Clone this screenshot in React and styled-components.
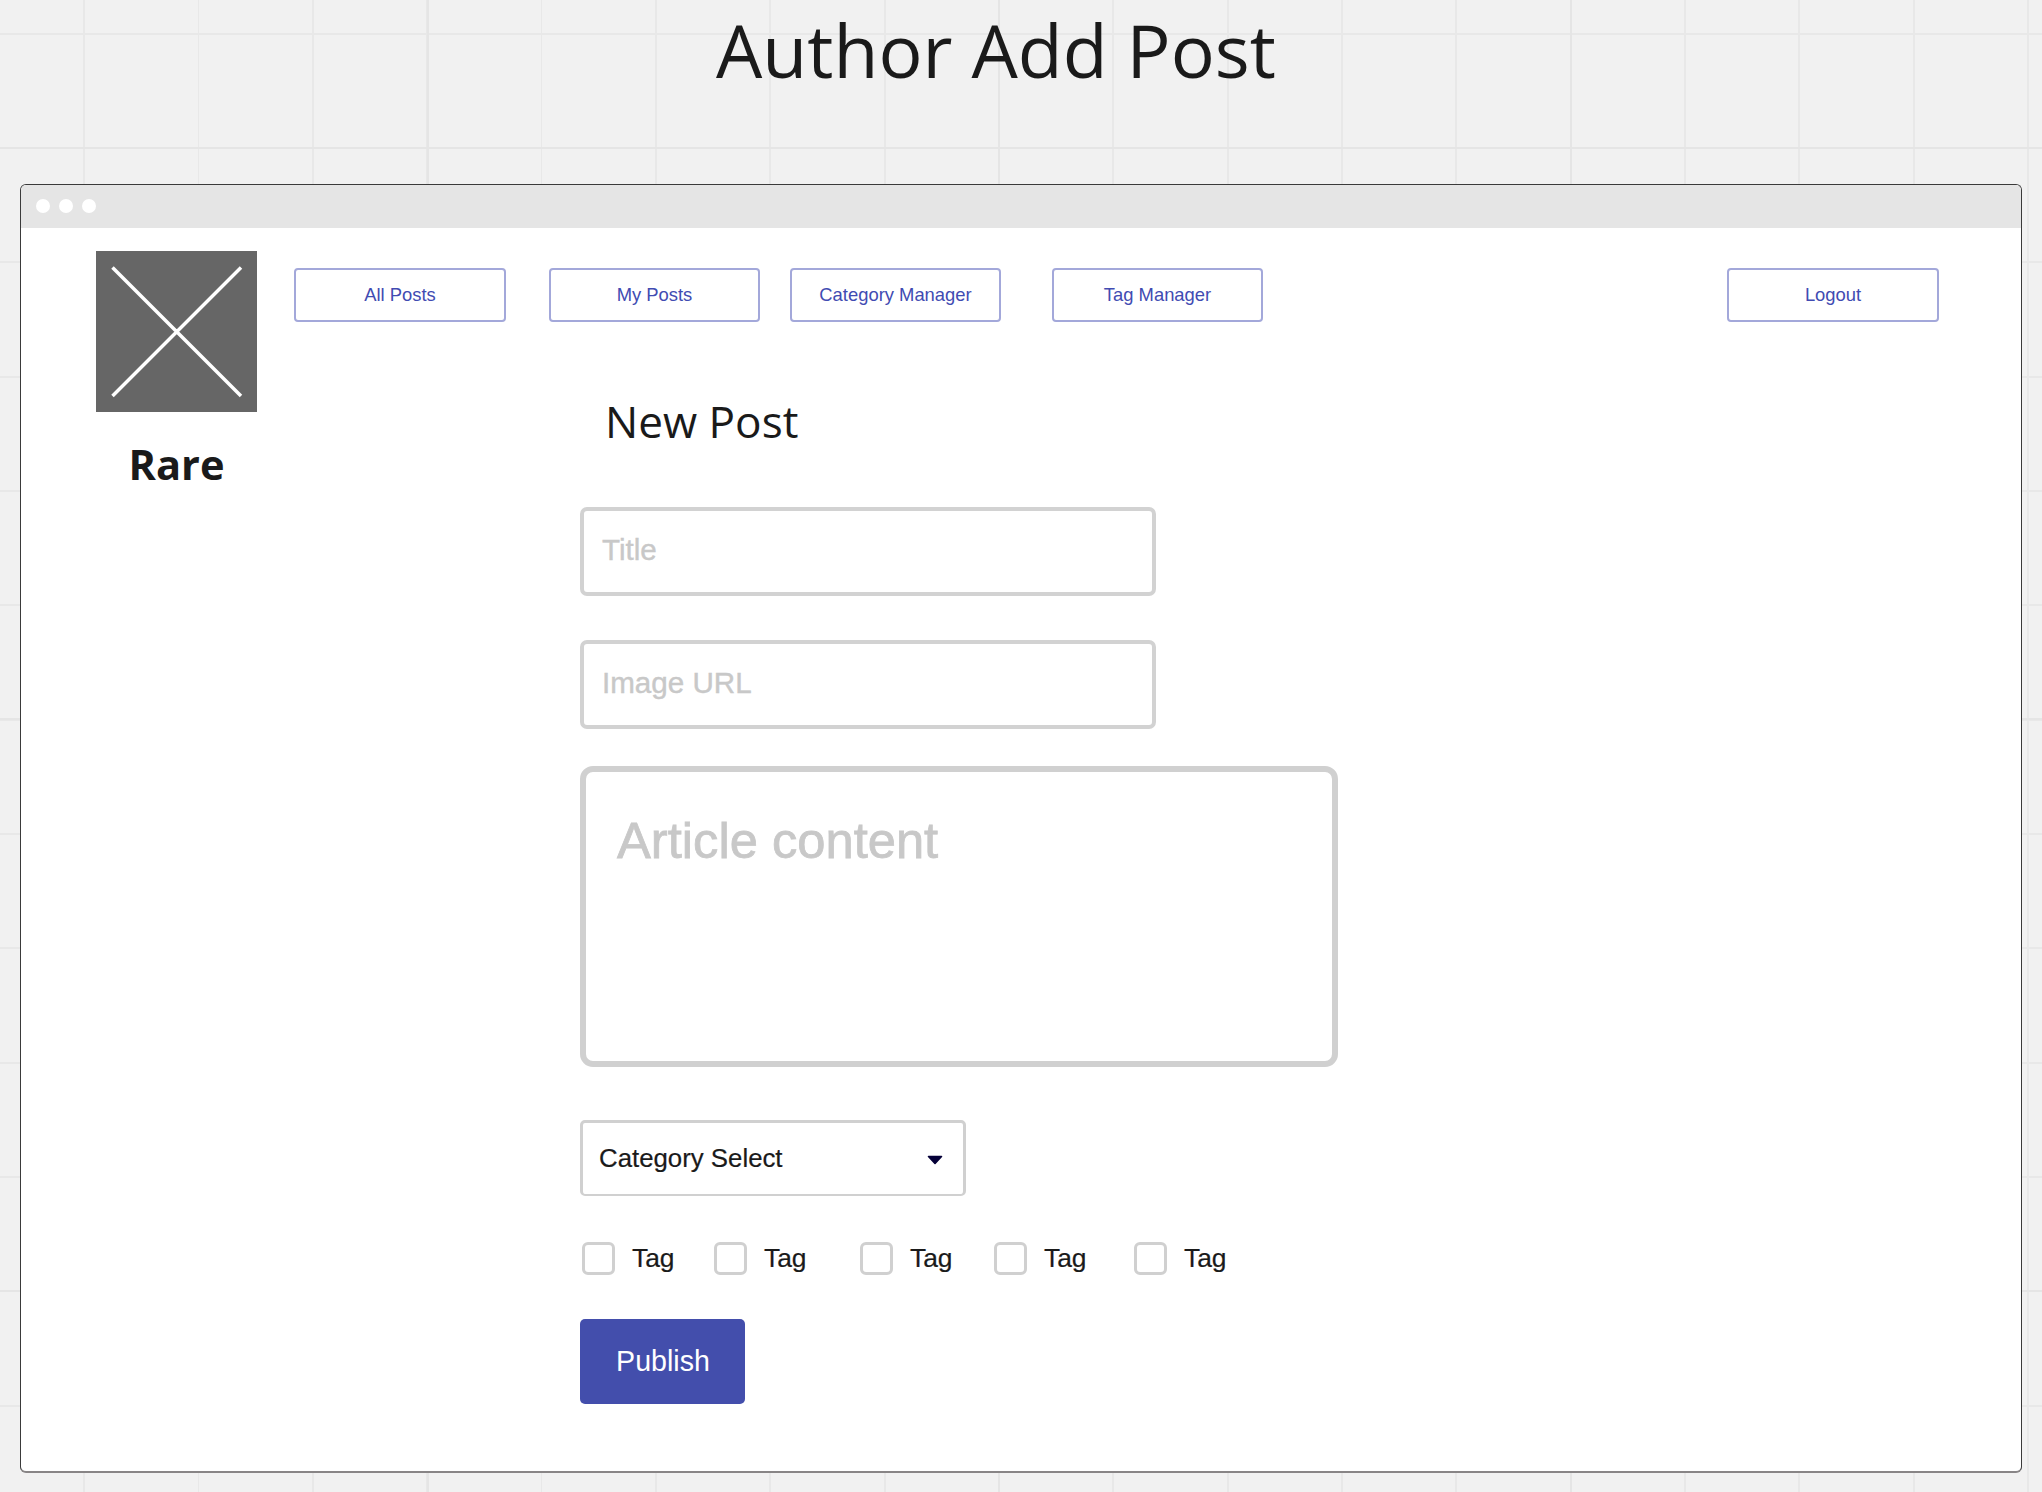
import React from "react";
import styled, { createGlobalStyle } from "styled-components";

const GlobalStyle = createGlobalStyle`
  *, *::before, *::after { box-sizing: border-box; }
  body { margin: 0; background: #f1f1f1; }
  button { font: inherit; margin: 0; padding: 0; }
`;

const sans = `"Liberation Sans", Arial, sans-serif`;
const display = `"Open Sans", "Noto Sans", sans-serif`;

const Board = styled.main`
  width: 2042px;
  height: 1492px;
  overflow: hidden;
  display: flex;
  flex-direction: column;
  padding-left: 20px;
  color: #1a1a1a;
  background-color: #f1f1f1;
  background-image:
    repeating-linear-gradient(to right, #e5e5e5 0 2px, transparent 2px 571.7px),
    repeating-linear-gradient(to bottom, #e5e5e5 0 2px, transparent 2px 571.7px),
    repeating-linear-gradient(to right, #e8e8e8 0 1.8px, transparent 1.8px 114.34px),
    repeating-linear-gradient(to bottom, #e8e8e8 0 1.8px, transparent 1.8px 114.34px);
  background-size: 2700px 100%, 100% 2200px, 2200px 100%, 100% 1700px;
  background-position: -145px 0, 0 -425px, -31px 0, 0 -81.6px;
  background-repeat: no-repeat;
`;

const BoardTitle = styled.h1`
  margin: 0;
  height: 184px;
  padding-left: 696px;
  font: 400 73.3px/100px ${display};
  white-space: nowrap;
`;

const Window = styled.section`
  width: 2002px;
  height: 1289px;
  flex: none;
  display: flex;
  flex-direction: column;
  overflow: hidden;
  background: #fff;
  border: 1px solid #3a3a3a;
  border-bottom: 2px solid #888586;
  border-radius: 6px;
`;

const TitleBar = styled.div`
  height: 43px;
  flex: none;
  display: flex;
  align-items: flex-start;
  gap: 9px;
  padding: 14px 0 0 15px;
  background: #e5e5e5;
`;

const Dot = styled.span`
  width: 14px;
  height: 14px;
  border-radius: 50%;
  background: #fff;
`;

const Page = styled.div`
  flex: 1;
  display: flex;
  align-items: flex-start;
  padding: 23px 82px 0 75px;
`;

const Brand = styled.div`
  width: 161px;
  flex: none;
  display: flex;
  flex-direction: column;
  align-items: center;
  gap: 23px;
`;

const ImagePlaceholder = styled.svg`
  display: block;
  width: 161px;
  height: 161px;
`;

const BrandName = styled.div`
  font: 700 41.6px/58px ${display};
`;

const Main = styled.div`
  flex: 1;
  display: flex;
  flex-direction: column;
  padding: 17px 0 0 37px;
`;

const Nav = styled.nav`
  display: flex;
`;

const NavButton = styled.button`
  width: ${(p) => p.$width}px;
  flex: none;
  height: 54px;
  margin-left: ${(p) => p.$gap || 0}px;
  padding-bottom: 1px;
  border: 2px solid #a3a8da;
  border-radius: 4px;
  background: #fff;
  color: #414bb2;
  font: 400 18.4px/24px ${sans};
`;

const Form = styled.form`
  display: flex;
  flex-direction: column;
  align-items: flex-start;
  padding: 69px 0 0 286px;
`;

const FormTitle = styled.h2`
  margin: 0 0 56px 25px;
  font: 400 44.1px/60px ${display};
`;

const Field = styled.div`
  width: 576px;
  height: 89px;
  margin-bottom: ${(p) => p.$after}px;
  padding: 19px 0 0 18px;
  border: 4px solid #d2d2d2;
  border-radius: 7px;
  color: #c8c8c8;
  font: 400 29.6px/40px ${sans};
  -webkit-text-stroke: 0.4px #c8c8c8;
`;

const ContentField = styled.div`
  width: 758px;
  height: 301px;
  margin-bottom: 53px;
  padding: 39px 0 0 31px;
  border: 6px solid #d0d0d0;
  border-radius: 13px;
  color: #c8c8c8;
  font: 400 50.7px/60px ${sans};
  -webkit-text-stroke: 0.8px #c8c8c8;
`;

const Select = styled.div`
  width: 386px;
  height: 76px;
  margin-bottom: 46px;
  display: flex;
  align-items: center;
  justify-content: space-between;
  padding: 0 20px 2px 16px;
  border: 3px solid #d0d0d0;
  border-bottom-width: 2px;
  border-radius: 5px;
  font: 400 25.8px/36px ${sans};
  -webkit-text-stroke: 0.2px #1a1a1a;
`;

const Caret = styled.svg`
  width: 16px;
  height: 10px;
  margin-top: 4px;
`;

const TagRow = styled.div`
  display: flex;
  padding-left: 2px;
  margin-bottom: 43px;
`;

const Tag = styled.label`
  display: flex;
  height: 34px;
  width: ${(p) => p.$width}px;
  gap: 17px;
  font: 400 26.4px/32px ${sans};
  -webkit-text-stroke: 0.2px #1a1a1a;
`;

const CheckBox = styled.span`
  width: 33px;
  height: 33px;
  border: 3px solid #d0d0d0;
  border-radius: 6px;
`;

const PublishButton = styled.button`
  width: 165px;
  height: 85px;
  padding: 0 0 2px 1px;
  border: 0;
  border-radius: 5px;
  background: #434eac;
  color: #fff;
  font: 400 28.6px/36px ${sans};
`;

const navItems = [
  { label: "All Posts", gap: 0, width: 212 },
  { label: "My Posts", gap: 43, width: 211 },
  { label: "Category Manager", gap: 30, width: 211 },
  { label: "Tag Manager", gap: 51, width: 211 },
  { label: "Logout", gap: 464, width: 212 },
];

const tagWidths = [132, 146, 134, 140, 100];

export default function App() {
  return (
    <>
      <GlobalStyle />
      <Board>
        <BoardTitle>Author Add Post</BoardTitle>
        <Window>
          <TitleBar>
            <Dot />
            <Dot />
            <Dot />
          </TitleBar>
          <Page>
            <Brand>
              <ImagePlaceholder viewBox="0 0 161 161">
                <rect width="161" height="161" fill="#666" />
                <path d="M16.5 16.5L145 145M145 16.5L16.5 145" stroke="#fff" strokeWidth="3.5" />
              </ImagePlaceholder>
              <BrandName>Rare</BrandName>
            </Brand>
            <Main>
              <Nav>
                {navItems.map((item) => (
                  <NavButton key={item.label} $gap={item.gap} $width={item.width}>
                    {item.label}
                  </NavButton>
                ))}
              </Nav>
              <Form>
                <FormTitle>New Post</FormTitle>
                <Field $after={44}>Title</Field>
                <Field $after={37}>Image URL</Field>
                <ContentField>Article content</ContentField>
                <Select>
                  Category Select
                  <Caret viewBox="0 0 16 10">
                    <path
                      d="M1.5 1.5H14.5L8 8.5Z"
                      fill="#050038"
                      stroke="#050038"
                      strokeWidth="1.6"
                      strokeLinejoin="round"
                    />
                  </Caret>
                </Select>
                <TagRow>
                  {tagWidths.map((width, i) => (
                    <Tag key={i} $width={width}>
                      <CheckBox />
                      Tag
                    </Tag>
                  ))}
                </TagRow>
                <PublishButton type="button">Publish</PublishButton>
              </Form>
            </Main>
          </Page>
        </Window>
      </Board>
    </>
  );
}
